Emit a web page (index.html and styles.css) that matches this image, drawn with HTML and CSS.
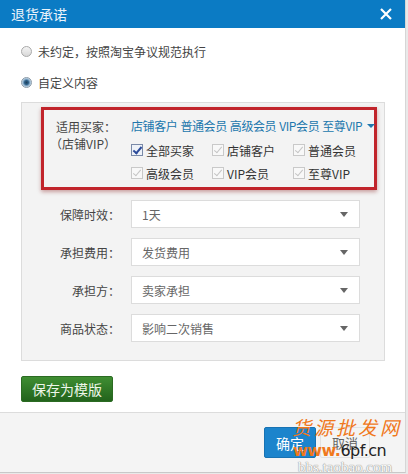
FILE: index.html
```html
<!DOCTYPE html>
<html lang="zh-CN">
<head>
    <meta charset="UTF-8">
    <title>退货承诺</title>
    <link rel="stylesheet" href="styles.css">
</head>
<body>
    <div class="dialog">
        <div class="dialog-head">
            <span class="dialog-title">退货承诺</span>
            <span class="dialog-close">
                <svg width="14" height="14" viewBox="0 0 14 14"><path d="M2 2 L12 12 M12 2 L2 12" stroke="#fff" stroke-width="2.2" fill="none"/></svg>
            </span>
        </div>

        <div class="dialog-body">
            <label class="radio-row"><span class="radio"></span>未约定，按照淘宝争议规范执行</label>
            <label class="radio-row"><span class="radio checked"></span>自定义内容</label>

            <div class="custom-box">
                <div class="buyer-area">
                    <div class="buyer-label">适用买家：<br>（店铺VIP）</div>
                    <div class="buyer-content">
                        <div class="buyer-links">
                            <a>店铺客户</a><a>普通会员</a><a>高级会员</a><a>VIP会员</a><a>至尊VIP</a>
                            <span class="caret-blue"></span>
                        </div>
                        <div class="check-grid">
                            <label class="check-item"><span class="checkbox on"></span>全部买家</label>
                            <label class="check-item"><span class="checkbox"></span>店铺客户</label>
                            <label class="check-item"><span class="checkbox"></span>普通会员</label>
                            <label class="check-item"><span class="checkbox"></span>高级会员</label>
                            <label class="check-item"><span class="checkbox"></span>VIP会员</label>
                            <label class="check-item"><span class="checkbox"></span>至尊VIP</label>
                        </div>
                    </div>
                </div>

                <div class="form-row">
                    <span class="form-label">保障时效：</span>
                    <div class="select">1天<span class="caret"></span></div>
                </div>
                <div class="form-row">
                    <span class="form-label">承担费用：</span>
                    <div class="select">发货费用<span class="caret"></span></div>
                </div>
                <div class="form-row">
                    <span class="form-label">承担方：</span>
                    <div class="select">卖家承担<span class="caret"></span></div>
                </div>
                <div class="form-row">
                    <span class="form-label">商品状态：</span>
                    <div class="select">影响二次销售<span class="caret"></span></div>
                </div>
            </div>

            <button class="btn-save">保存为模版</button>
        </div>

        <div class="dialog-foot">
            <button class="btn-ok">确定</button>
            <button class="btn-cancel">取消</button>
        </div>

        <div class="watermark">
            <div class="wm-cn">货源批发网</div>
            <div class="wm-url">www.<span class="dark">6pf.cn</span></div>
            <div class="wm-bbs">bbs.taobao.com</div>
        </div>
    </div>
</body>
</html>
```

FILE: styles.css
```css
* {
    margin: 0;
    padding: 0;
    box-sizing: border-box;
}

body {
    width: 408px;
    height: 474px;
    background: #e9e9e9;
    font-family: 'Noto Sans CJK SC', 'Noto Sans', sans-serif;
    font-size: 12px;
    color: #333;
    overflow: hidden;
}

.dialog {
    width: 406px;
    height: 473px;
    background: #fff;
    border-right: 1px solid #d6d6d6;
    border-bottom: 1px solid #c8c8c8;
    position: relative;
    overflow: hidden;
}

.dialog-head {
    height: 28px;
    background: #0b7bc4;
    display: flex;
    align-items: center;
    justify-content: space-between;
    padding: 0 11px;
}

.dialog-title {
    color: #eaf3fb;
    font-size: 14px;
}

.dialog-close {
    display: flex;
    margin-right: 1px;
}

.dialog-body {
    padding: 13px 20px 13px 21px;
}

.radio-row {
    display: flex;
    align-items: center;
    height: 20px;
    margin-bottom: 11px;
    color: #444;
}

.radio {
    width: 11px;
    height: 11px;
    border-radius: 50%;
    border: 1px solid #a9a9a9;
    background: linear-gradient(#f4f4f4, #d8d8d8);
    margin-right: 6px;
}

.radio.checked {
    background: radial-gradient(circle, #1e3f5c 0, #2d6088 2px, #8fb2cf 3.5px, #dfe8f0 5px);
    border-color: #8a9aa8;
}

.custom-box {
    background: #f3f3f3;
    border: 1px solid #dcdcdc;
    padding: 4px 7px 18px 19px;
    margin-top: -1px;
}

.buyer-area {
    border: 3px solid #c1242b;
    box-shadow: 0 2px 4px rgba(120, 0, 0, 0.35);
    display: flex;
    padding: 7px 0 5px 0;
    margin-bottom: 7px;
    width: 336px;
}

.buyer-label {
    width: 72px;
    flex-shrink: 0;
    text-align: right;
    line-height: 17px;
    color: #444;
    padding-top: 1px;
    white-space: nowrap;
}

.buyer-content {
    margin-left: 15px;
}

.buyer-links {
    color: #2177ad;
    line-height: 18px;
    white-space: nowrap;
    display: flex;
    align-items: center;
    gap: 3px;
    letter-spacing: -0.4px;
}

.caret-blue {
    width: 0;
    height: 0;
    border-left: 4px solid transparent;
    border-right: 4px solid transparent;
    border-top: 4px solid #2177ad;
    margin-left: 2px;
}

.check-grid {
    display: grid;
    grid-template-columns: 81px 81px 72px;
    row-gap: 5px;
    margin-top: 6px;
}

.check-item {
    display: flex;
    align-items: center;
    height: 18px;
    font-size: 12px;
    color: #333;
    white-space: nowrap;
}

.checkbox {
    width: 12px;
    height: 12px;
    border: 1px solid #c9c9c9;
    background: #f8f8f8;
    margin-right: 3px;
    position: relative;
}

.checkbox::after {
    content: '';
    position: absolute;
    left: 3px;
    top: 0px;
    width: 3px;
    height: 7px;
    border-right: 1.5px solid #c4c4c4;
    border-bottom: 1.5px solid #c4c4c4;
    transform: rotate(40deg);
}

.checkbox.on {
    border-color: #7a8aa8;
    background: #eef2f8;
}

.checkbox.on::after {
    border-color: #2c4b9a;
    border-width: 0 2px 2px 0;
}

.form-row {
    display: flex;
    align-items: center;
    margin-top: 10px;
}

.form-row:first-of-type {
    margin-top: 0;
}

.form-label {
    width: 79px;
    text-align: right;
    color: #444;
    margin-right: 11px;
}

.select {
    width: 229px;
    height: 28px;
    background: #fff;
    border: 1px solid #dcdcdc;
    padding: 0 10px;
    display: flex;
    align-items: center;
    justify-content: space-between;
    color: #666;
}

.caret {
    width: 0;
    height: 0;
    border-left: 4px solid transparent;
    border-right: 4px solid transparent;
    border-top: 5px solid #666;
    margin-right: 1px;
}

.btn-save {
    margin-top: 15px;
    width: 92px;
    height: 26px;
    border: 1px solid #2b6b22;
    border-radius: 2px;
    background: linear-gradient(#3f8e32, #22631c);
    color: #eef6ea;
    font-family: inherit;
    font-size: 14px;
}

.dialog-foot {
    position: absolute;
    left: 0;
    right: 0;
    top: 412px;
    bottom: 0;
    background: #f4f4f4;
    border-top: 1px solid #dcdcdc;
    display: flex;
    justify-content: flex-end;
    align-items: flex-start;
    padding: 14px 35px 0 0;
    gap: 4px;
}

.btn-ok {
    width: 52px;
    height: 31px;
    background: #1c84cc;
    border: 1px solid #1872b2;
    border-radius: 2px;
    color: #fff;
    font-family: inherit;
    font-size: 14px;
}

.btn-cancel {
    width: 50px;
    height: 31px;
    background: #f4f4f4;
    border: 1px solid #e2e2e2;
    border-radius: 2px;
    color: #666;
    font-family: inherit;
    font-size: 13px;
}

.watermark {
    position: absolute;
    left: 292px;
    top: 413px;
    width: 114px;
    pointer-events: none;
}

.wm-cn {
    color: #f0781c;
    font-size: 19px;
    letter-spacing: 3px;
    line-height: 28px;
    font-style: italic;
    white-space: nowrap;
}

.wm-url {
    color: #f0781c;
    font-size: 16px;
    line-height: 19px;
    font-weight: bold;
    font-family: 'DejaVu Sans', sans-serif;
    margin-left: 1px;
    white-space: nowrap;
    letter-spacing: -0.5px;
}

.wm-url .dark {
    color: #222;
    font-weight: normal;
}

.wm-bbs {
    color: #fafafa;
    font-size: 15px;
    line-height: 14px;
    font-family: 'Liberation Serif', serif;
    text-shadow: 0 0 1px #888, 0 0 1px #888;
    margin-left: 6px;
    white-space: nowrap;
}
```
